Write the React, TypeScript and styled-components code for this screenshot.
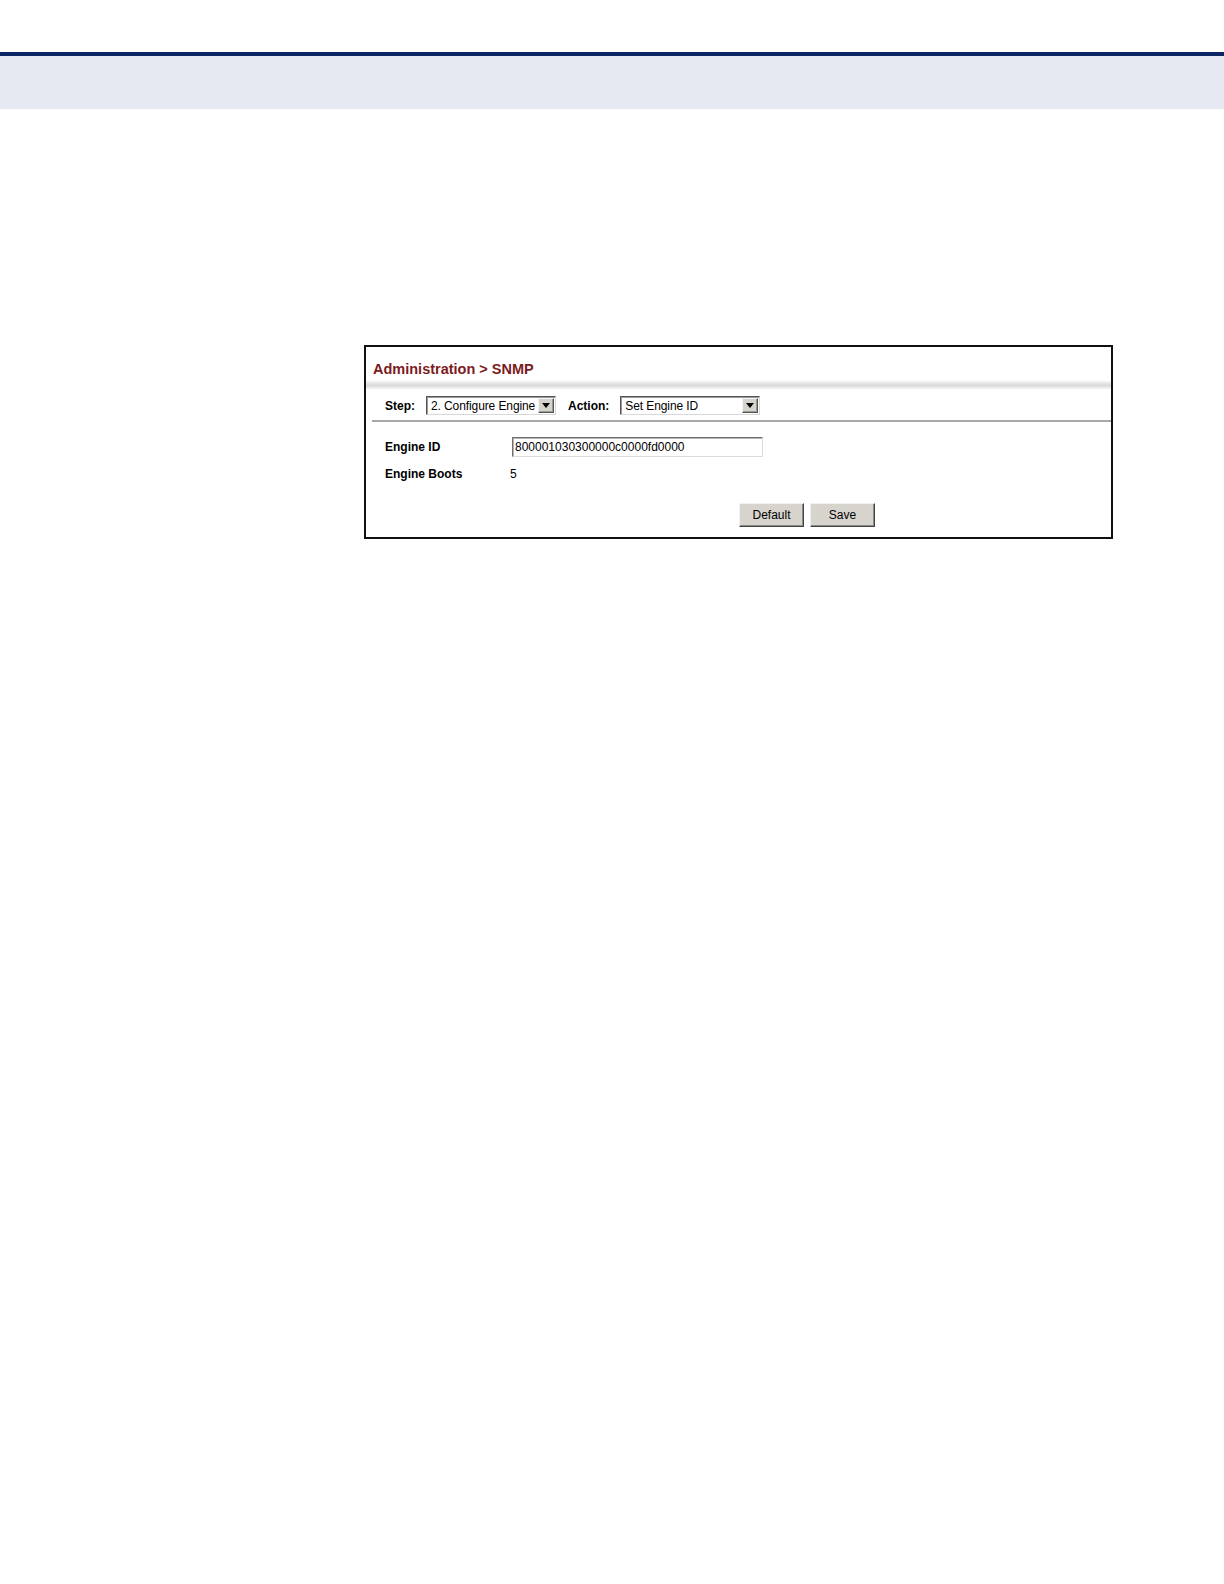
import React from "react";
import styled, { createGlobalStyle } from "styled-components";

const Global = createGlobalStyle`
  html, body { margin: 0; padding: 0; background: #ffffff; }
  body { font-family: "Liberation Sans", Arial, sans-serif; color: #000; }
`;

const Page = styled.div`
  width: 1224px;
  min-height: 1584px;
  background: #fff;
`;

const TopSpace = styled.div`
  height: 52px;
`;

const NavyRule = styled.div`
  height: 4px;
  background: #0b2462;
`;

const HeaderBand = styled.div`
  height: 53px;
  background: #e6e9f1;
`;

const Content = styled.div`
  padding: 236px 0 0 364px;
`;

const Panel = styled.div`
  width: 745px;
  height: 190px;
  border: 2px solid #111;
  display: flex;
  flex-direction: column;
`;

const Title = styled.div`
  padding: 14px 0 0 7px;
  font-size: 14.5px;
  line-height: 16px;
  font-weight: bold;
  color: #7d1b22;
`;

const ShadowBand = styled.div`
  margin-top: 3px;
  height: 9px;
  background: linear-gradient(to bottom, #ffffff 0%, #e4e4e4 40%, #d9d9d9 60%, #f6f6f6 100%);
`;

const StepRow = styled.div`
  margin-left: 6px;
  padding: 7px 0 5px 13px;
  display: flex;
  align-items: center;
  border-bottom: 2px solid #a8a8a8;
`;

const RowLabel = styled.span<{ $gap: number }>`
  font-size: 12px;
  font-weight: bold;
  margin-right: ${(p) => p.$gap}px;
`;

const SelectBox = styled.div<{ $width: number; $after?: number }>`
  box-sizing: border-box;
  width: ${(p) => p.$width}px;
  height: 19px;
  margin-right: ${(p) => p.$after ?? 0}px;
  border: 1px solid;
  border-color: #555 #d8d8d8 #d8d8d8 #555;
  box-shadow: inset 1px 1px 0 #9a9a9a;
  display: flex;
  align-items: center;
  background: #fff;
`;

const SelectText = styled.span`
  flex: 1;
  font-size: 12px;
  padding-left: 4px;
  letter-spacing: -0.1px;
  white-space: nowrap;
  overflow: hidden;
`;

const ArrowBtn = styled.span`
  box-sizing: border-box;
  width: 16px;
  height: 15px;
  margin-right: 1px;
  background: #d6d3cc;
  border: 1px solid;
  border-color: #f4f4f4 #555 #555 #f4f4f4;
  box-shadow: inset -1px -1px 0 #9a9a9a;
  display: flex;
  align-items: center;
  justify-content: center;
`;

const Fields = styled.div`
  padding: 15px 0 0 19px;
  display: grid;
  grid-template-columns: 127px auto;
  row-gap: 10px;
  align-items: center;
`;

const FieldLabel = styled.span`
  font-size: 12px;
  font-weight: bold;
`;

const TextInput = styled.div`
  box-sizing: border-box;
  width: 251px;
  height: 20px;
  border: 1px solid;
  border-color: #6f6f6f #dcdcdc #dcdcdc #6f6f6f;
  box-shadow: inset 1px 1px 0 #b5b5b5;
  font-size: 12px;
  line-height: 18px;
  padding-left: 2px;
`;

const Value = styled.span`
  font-size: 12px;
  margin-left: -2px;
`;

const ButtonBar = styled.div`
  padding: 22px 0 0 373px;
  display: flex;
  gap: 6px;
`;

const Button = styled.div`
  box-sizing: border-box;
  width: 65px;
  height: 24px;
  background: #d7d4ce;
  border: 1px solid;
  border-color: #f2f2f2 #444 #444 #f2f2f2;
  box-shadow: inset -1px -1px 0 #8a8a8a;
  font-size: 12px;
  display: flex;
  align-items: center;
  justify-content: center;
`;

const Arrow = () => (
  <svg width="8" height="5" viewBox="0 0 8 5">
    <polygon points="0,0 8,0 4,5" fill="#000" />
  </svg>
);

export default function App() {
  return (
    <Page>
      <Global />
      <TopSpace />
      <NavyRule />
      <HeaderBand />
      <Content>
        <Panel>
          <Title>Administration &gt; SNMP</Title>
          <ShadowBand />
          <StepRow>
            <RowLabel $gap={11}>Step:</RowLabel>
            <SelectBox $width={130} $after={12}>
              <SelectText>2. Configure Engine</SelectText>
              <ArrowBtn>
                <Arrow />
              </ArrowBtn>
            </SelectBox>
            <RowLabel $gap={11}>Action:</RowLabel>
            <SelectBox $width={140}>
              <SelectText>Set Engine ID</SelectText>
              <ArrowBtn>
                <Arrow />
              </ArrowBtn>
            </SelectBox>
          </StepRow>
          <Fields>
            <FieldLabel>Engine ID</FieldLabel>
            <TextInput>800001030300000c0000fd0000</TextInput>
            <FieldLabel>Engine Boots</FieldLabel>
            <Value>5</Value>
          </Fields>
          <ButtonBar>
            <Button>Default</Button>
            <Button>Save</Button>
          </ButtonBar>
        </Panel>
      </Content>
    </Page>
  );
}
